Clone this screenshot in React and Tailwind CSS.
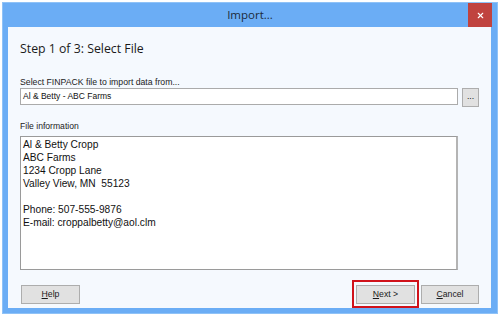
import { X } from "lucide-react";

const ui = { fontFamily: '"Liberation Sans", Arial, sans-serif' };
const head = { fontFamily: '"Open Sans", "Noto Sans", sans-serif' };

function Btn({ children, className = "" }) {
  return (
    <button
      className={`flex h-[19px] items-center justify-center border border-[#adadad] bg-[#e1e1e1] text-[8.7px] leading-none text-[#1a1a1a] ${className}`}
      style={ui}
    >
      {children}
    </button>
  );
}

const info = [
  "Al & Betty Cropp",
  "ABC Farms",
  "1234 Cropp Lane",
  "Valley View, MN  55123",
  "",
  "Phone: 507-555-9876",
  "E-mail: croppalbetty@aol.clm",
];

export default function App() {
  return (
    <div className="h-[316px] w-[501px] bg-white pt-[2px] pl-[2px] pr-[3px] pb-[2px]">
      <div className="flex h-[312px] flex-col border border-[#8fc2f7] bg-[#6badf5]">
        {/* title bar */}
        <div className="relative flex h-[24px] items-center justify-center">
          <span className="text-[11.5px] text-[#1c2b3a]" style={head}>
            Import...
          </span>
          <div className="absolute right-[5px] top-0 flex h-[24px] w-[24px] items-center justify-center bg-[#c0433f]">
            <X size={9} strokeWidth={3} className="text-white" />
          </div>
        </div>

        {/* client area */}
        <div className="mr-[6px] mb-[5px] ml-[5px] flex flex-1 flex-col bg-[#f5f9fe] px-[12px]">
          <div className="mt-[14px] text-[12.3px] leading-[16px] text-[#1a1a1a]" style={head}>
            Step 1 of 3: Select File
          </div>

          <div className="mt-[20px] text-[8.7px] leading-[11px] text-[#222]" style={ui}>
            Select FINPACK file to import data from...
          </div>
          <div className="flex gap-[4px]">
            <div
              className="flex h-[17px] w-[438px] items-center border border-[#ababab] bg-white pl-[2px] text-[8.5px] text-[#111]"
              style={ui}
            >
              Al &amp; Betty - ABC Farms
            </div>
            <Btn className="w-[17px] h-[17px] pb-[3px]">...</Btn>
          </div>

          <div className="mt-[14px] text-[8.6px] leading-[11px] text-[#222]" style={ui}>
            File information
          </div>
          <div
            className="mt-[4px] h-[134px] w-[438px] border border-[#9a9a9a] border-r-[2px] border-r-[#b4b4b4] bg-white pt-[1px] pl-[2px] text-[10.2px] leading-[13px] text-[#111]"
            style={ui}
          >
            {info.map((l, i) => (
              <div key={i} className="h-[13px] whitespace-pre">
                {l}
              </div>
            ))}
          </div>

          <div className="mt-[15px] flex items-center">
            <Btn className="ml-[1px] w-[59px]">
              <span className="underline underline-offset-1">H</span>elp
            </Btn>
            <div className="flex-1" />
            <div className="relative mr-[4px]">
              <Btn className="w-[59px]">
                <span className="underline underline-offset-1">N</span>ext &gt;
              </Btn>
              <span className="absolute -top-[5px] -right-[4px] -bottom-[4px] -left-[4px] border-2 border-[#d0121b]" />
            </div>
            <Btn className="ml-[2px] w-[58px]">
              <span className="underline underline-offset-1">C</span>ancel
            </Btn>
          </div>
        </div>
      </div>
    </div>
  );
}
